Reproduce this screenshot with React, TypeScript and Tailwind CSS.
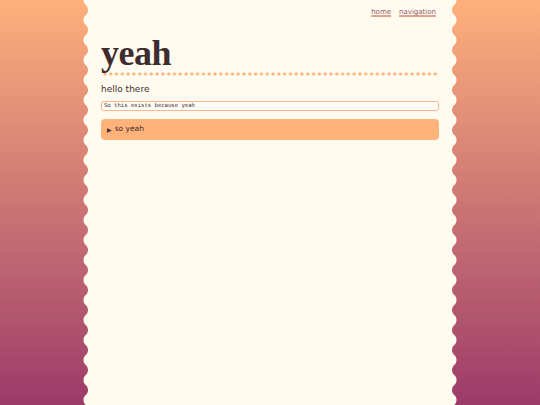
import React from 'react';

const Wave = ({ side }: { side: 'left' | 'right' }) => (
  <svg
    className={`absolute top-0 h-full w-[5px] ${side === 'left' ? '-left-[5px]' : '-right-[5px] -scale-x-100'}`}
  >
    <defs>
      <pattern id={`wave-${side}`} width="5" height="20" patternUnits="userSpaceOnUse">
        <path d="M5,0 L0.5,0 C0.5,5.5 5,4.5 5,10 C5,15.5 0.5,14.5 0.5,20 L5,20 Z" fill="#fffcef" />
      </pattern>
    </defs>
    <rect width="100%" height="100%" fill={`url(#wave-${side})`} />
  </svg>
);

export default function App() {
  return (
    <div className="min-h-screen w-full bg-gradient-to-b from-[#ffb07a] to-[#9c3a68] flex justify-center" style={{ fontFamily: '"DejaVu Sans", Verdana, sans-serif' }}>
      <div className="relative w-[364px] min-h-screen bg-[#fffcef] px-[13px] text-[#3f2c30]">
        <Wave side="left" />
        <Wave side="right" />

        {/* nav */}
        <nav className="flex justify-end gap-[8px] pt-[7px] pr-[3px] text-[7px]">
          <a className="text-[#8e586c] underline decoration-[#e9a08e] decoration-[1.5px] underline-offset-[1px]">home</a>
          <a className="text-[#8e586c] underline decoration-[#e9a08e] decoration-[1.5px] underline-offset-[1px]">navigation</a>
        </nav>

        <h1 className="mt-[17px] text-[36px] leading-none font-bold tracking-[-0.5px]" style={{ fontFamily: '"Liberation Serif", Georgia, serif' }}>
          yeah
        </h1>
        <div className="mt-[1px] mx-px h-[4px] bg-[radial-gradient(circle,#fdb07a_1.4px,transparent_1.7px)] bg-[length:5.8px_4px] bg-repeat-x" />

        <p className="mt-[7px] text-[9px] leading-[12px]">hello there</p>

        <div className="mt-[6px] h-[10px] rounded-[3px] border border-[#f9b68a] bg-[#fffdf6] px-[2px] flex items-center text-[5.6px]" style={{ fontFamily: '"DejaVu Sans Mono", monospace' }}>
          So this exists because yeah
        </div>

        <details className="mt-[8px] rounded-[4px] bg-[#ffb37a] h-[21px] px-[6px] text-[7.5px]">
          <summary className="h-[21px] flex items-center gap-[3px] list-none cursor-pointer">
            <span className="text-[6px]">▶</span>
            <span>so yeah</span>
          </summary>
        </details>
      </div>
    </div>
  );
}
